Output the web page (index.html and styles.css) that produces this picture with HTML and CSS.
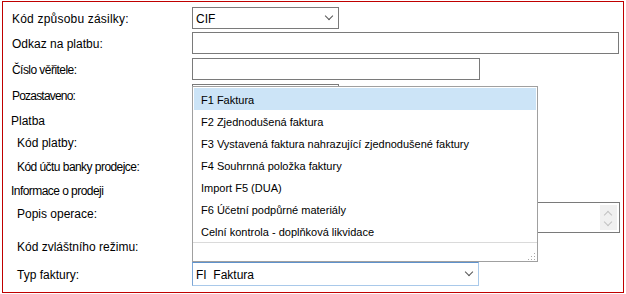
FILE: index.html
```html
<!DOCTYPE html>
<html lang="cs">
<head>
  <meta charset="UTF-8">
  <title>Faktura</title>
  <link rel="stylesheet" href="styles.css">
</head>
<body>

  <div class="frame">
    <div class="row r1">
      <span class="lbl wide">Kód způsobu zásilky:</span>
      <div class="combo w147"><span>CIF</span><i class="chev"></i></div>
    </div>
    <div class="row r2">
      <span class="lbl">Odkaz na platbu:</span>
      <div class="box w427"></div>
    </div>
    <div class="row r3">
      <span class="lbl tight">Číslo věřitele:</span>
      <div class="box w288"></div>
    </div>
    <div class="row r4">
      <span class="lbl tighter">Pozastaveno:</span>
      <div class="combo w147"><span></span><i class="chev"></i></div>
    </div>

    <div class="row head h22"><span class="lbl">Platba</span></div>
    <div class="row h23"><span class="lbl sub">Kód platby:</span></div>
    <div class="row h24"><span class="lbl sub tight">Kód účtu banky prodejce:</span></div>

    <div class="row head h24"><span class="lbl tight">Informace o prodeji</span></div>
    <div class="row top h32">
      <span class="lbl sub">Popis operace:</span>
      <div class="memo">
        <div class="spin"><i class="up"></i><i class="down"></i></div>
      </div>
    </div>
    <div class="row h24"><span class="lbl sub">Kód zvláštního režimu:</span></div>
    <div class="row last">
      <span class="lbl sub">Typ faktury:</span>
      <div class="combo focus w287"><span>FI&nbsp; Faktura</span><i class="chev"></i></div>
    </div>

    <!-- rozbalený seznam typu faktury -->
    <ul class="dropdown">
      <li class="sel">F1 Faktura</li>
      <li>F2 Zjednodušená faktura</li>
      <li>F3 Vystavená faktura nahrazující zjednodušené faktury</li>
      <li>F4 Souhrnná položka faktury</li>
      <li>Import F5 (DUA)</li>
      <li>F6 Účetní podpůrné materiály</li>
      <li>Celní kontrola - doplňková likvidace</li>
      <li class="foot"><i class="grip"></i></li>
    </ul>
  </div>

</body>
</html>
```

FILE: styles.css
```css
*, *::before, *::after {
  box-sizing: border-box;
}
html, body {
  margin: 0;
  padding: 0;
  background: #fff;
  font-family: "Liberation Sans", Arial, sans-serif;
  font-size: 11px;
  color: #000;
}

/* červený rámeček */
.frame {
  position: relative;
  margin: 1px 0 0 2px;
  width: 622px;
  height: 292px;
  border: 1px solid #c00000;
  padding-top: 5px;
}

/* řádky formuláře */
.row {
  display: grid;
  grid-template-columns: 189px 1fr;
  align-items: center;
}
.r1 { height: 25px; align-items: start; }
.r2 { height: 26px; align-items: start; }
.r3 { height: 26px; align-items: start; }
.r4 { height: 25px; align-items: start; }
.h22 { height: 22px; }
.h23 { height: 23px; }
.h24 { height: 24px; }
.h32 { height: 32px; }
.last { height: 30px; padding-top: 4px; align-items: start; }
.r1 .lbl, .r2 .lbl, .r3 .lbl, .r4 .lbl { line-height: 22px; }
.last .lbl { line-height: 24px; }
.top { align-items: start; }
.top .lbl { padding-top: 5px; }

.lbl {
  padding-left: 9px;
  padding-top: 1px;
  font-size: 12px;
  white-space: nowrap;
}
.head .lbl { padding-left: 8px; }
.lbl.sub { padding-left: 14px; }
.wide { letter-spacing: 0.2px; }
.tight { letter-spacing: -0.55px; }
.tighter { letter-spacing: -0.8px; }

/* vstupní pole */
.box, .combo, .memo {
  height: 22px;
  border: 1px solid #7a7a7a;
  background: #fff;
}
.w147 { width: 147px; }
.w287 { width: 287px; }
.w288 { width: 288px; }
.w427 { width: 427px; }

.combo {
  display: flex;
  align-items: center;
  justify-content: space-between;
  padding: 1px 6px 0 3px;
  font-size: 12px;
}
.combo.focus {
  height: 24px;
  border-color: #a9c9ea;
  border-top-color: #5e92cd;
  border-left-color: #7ca6d6;
}
.chev {
  width: 6px;
  height: 6px;
  border-right: 1px solid #555;
  border-bottom: 1px solid #555;
  transform: rotate(45deg);
  margin-top: -5px;
}

.memo {
  width: 428px;
  height: 31px;
  position: relative;
}
.spin {
  position: absolute;
  right: 2px;
  top: 2px;
  width: 17px;
  height: 25px;
  background: #f0f0f0;
}
.spin i {
  position: absolute;
  left: 5px;
  width: 6px;
  height: 6px;
  border-left: 1px solid #c2c2c2;
  border-top: 1px solid #c2c2c2;
}
.spin .up { top: 7px; transform: rotate(45deg); }
.spin .down { top: 14px; transform: rotate(225deg); }

/* seznam */
.dropdown {
  position: absolute;
  left: 189px;
  top: 84px;
  width: 346px;
  height: 176px;
  margin: 0;
  padding: 1px 1px 0;
  list-style: none;
  background: #fff;
  border: 1px solid #a0a0a0;
}
.dropdown li {
  height: 22px;
  line-height: 20px;
  padding: 2px 0 0 7px;
  white-space: nowrap;
}
.dropdown li.sel { background: #cce4f7; }
.dropdown li.foot {
  position: relative;
  height: 20px;
  margin: 0 -1px;
  padding: 0;
  border-top: 1px solid #dadada;
}
.grip {
  position: absolute;
  right: 2px;
  bottom: 2px;
  width: 8px;
  height: 8px;
  background:
    radial-gradient(circle, #a8a8a8 0.8px, transparent 1px) 0 0 / 3px 3px;
  clip-path: polygon(100% 0, 100% 100%, 0 100%);
}
```
